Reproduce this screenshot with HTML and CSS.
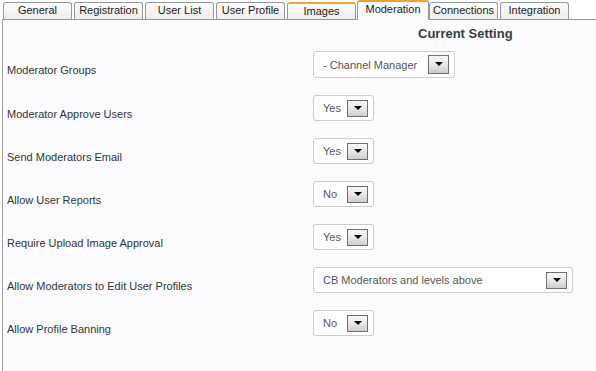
FILE: index.html
```html
<!DOCTYPE html>
<html lang="en">
  <head>
    <meta charset="UTF-8" />
    <title>Moderation</title>
    <link rel="stylesheet" href="styles.css">
  </head>
  <body>
    <div class="tabs">
      <div class="tab">General</div>
      <div class="tab">Registration</div>
      <div class="tab">User List</div>
      <div class="tab">User Profile</div>
      <div class="tab tab-hover">Images</div>
      <div class="tab tab-active">Moderation</div>
      <div class="tab">Connections</div>
      <div class="tab">Integration</div>
    </div>

    <div class="panel">
      <div class="heading">Current Setting</div>

      <div class="row row-first">
        <div class="label">Moderator Groups</div>
        <div class="select select-groups">
          <span>- Channel Manager</span>
          <span class="arrow arrow-tall"><svg width="8" height="4" viewBox="0 0 8 4"><path d="M0 0H8L4 4Z" fill="#000"/></svg></span>
        </div>
      </div>

      <div class="row">
        <div class="label">Moderator Approve Users</div>
        <div class="select">
          <span>Yes</span>
          <span class="arrow"><svg width="8" height="4" viewBox="0 0 8 4"><path d="M0 0H8L4 4Z" fill="#000"/></svg></span>
        </div>
      </div>

      <div class="row">
        <div class="label">Send Moderators Email</div>
        <div class="select">
          <span>Yes</span>
          <span class="arrow"><svg width="8" height="4" viewBox="0 0 8 4"><path d="M0 0H8L4 4Z" fill="#000"/></svg></span>
        </div>
      </div>

      <div class="row">
        <div class="label">Allow User Reports</div>
        <div class="select">
          <span>No</span>
          <span class="arrow"><svg width="8" height="4" viewBox="0 0 8 4"><path d="M0 0H8L4 4Z" fill="#000"/></svg></span>
        </div>
      </div>

      <div class="row">
        <div class="label">Require Upload Image Approval</div>
        <div class="select">
          <span>Yes</span>
          <span class="arrow"><svg width="8" height="4" viewBox="0 0 8 4"><path d="M0 0H8L4 4Z" fill="#000"/></svg></span>
        </div>
      </div>

      <div class="row">
        <div class="label">Allow Moderators to Edit User Profiles</div>
        <div class="select select-wide">
          <span>CB Moderators and levels above</span>
          <span class="arrow"><svg width="8" height="4" viewBox="0 0 8 4"><path d="M0 0H8L4 4Z" fill="#000"/></svg></span>
        </div>
      </div>

      <div class="row">
        <div class="label">Allow Profile Banning</div>
        <div class="select">
          <span>No</span>
          <span class="arrow"><svg width="8" height="4" viewBox="0 0 8 4"><path d="M0 0H8L4 4Z" fill="#000"/></svg></span>
        </div>
      </div>
    </div>
  </body>
</html>
```

FILE: styles.css
```css
body {
  margin: 0;
  background-color: #ffffff;
  font-family: "Liberation Sans", Arial, sans-serif;
  font-size: 11px;
  color: #333333;
}

/* tab strip */
.tabs {
  display: flex;
  align-items: flex-end;
  height: 20px;
  padding-left: 3px;
  margin-bottom: -1px;
  position: relative;
  z-index: 1;
}

.tab {
  width: 69px;
  height: 17px;
  box-sizing: border-box;
  margin: 0 2px 1px 0;
  border: 1px solid #919b9c;
  border-bottom: none;
  border-radius: 3px 3px 0 0;
  background: linear-gradient(#fefefe, #ecebe7);
  text-align: center;
  line-height: 15px;
  color: #1c1c1c;
}

.tab-hover {
  border-top: 2px solid #f2a735;
  line-height: 14px;
}

.tab-active {
  width: 72px;
  height: 20px;
  margin: 0 0 0 -1px;
  border-top: 2px solid #f0a030;
  background: #fbfbfd;
  line-height: 14px;
}

/* settings panel */
.panel {
  margin-left: 2px;
  min-height: 360px;
  padding-left: 4px;
  border-left: 1px solid #a0a0a0;
  border-top: 1px solid #919b9c;
  background-color: #fbfbfd;
}

.heading {
  padding: 6px 0 10px 411px;
  font-size: 13px;
  font-weight: bold;
  line-height: 15px;
  color: #3a3a3a;
}

.row {
  display: flex;
  height: 43px;
}

.row-first {
  height: 44px;
}

.label {
  width: 306px;
  padding-top: 12px;
  line-height: 14px;
  color: #333333;
}

.select {
  width: 61px;
  height: 26px;
  box-sizing: border-box;
  display: flex;
  align-items: center;
  justify-content: space-between;
  padding: 0 5px 0 9px;
  border: 1px solid #cccccc;
  border-radius: 3px;
  background-color: #ffffff;
  color: #555555;
}

.select-groups {
  width: 142px;
  height: 27px;
}

.select-wide {
  width: 260px;
}

.arrow {
  width: 21px;
  height: 17px;
  box-sizing: border-box;
  display: flex;
  justify-content: center;
  padding-top: 5px;
  border: 1px solid #6e6e6e;
  background: linear-gradient(#f7f7f7 0%, #e8e8e8 50%, #cdcdcd 100%);
}

.arrow svg {
  display: block;
}

.arrow-tall {
  height: 19px;
  padding-top: 6px;
}
```
